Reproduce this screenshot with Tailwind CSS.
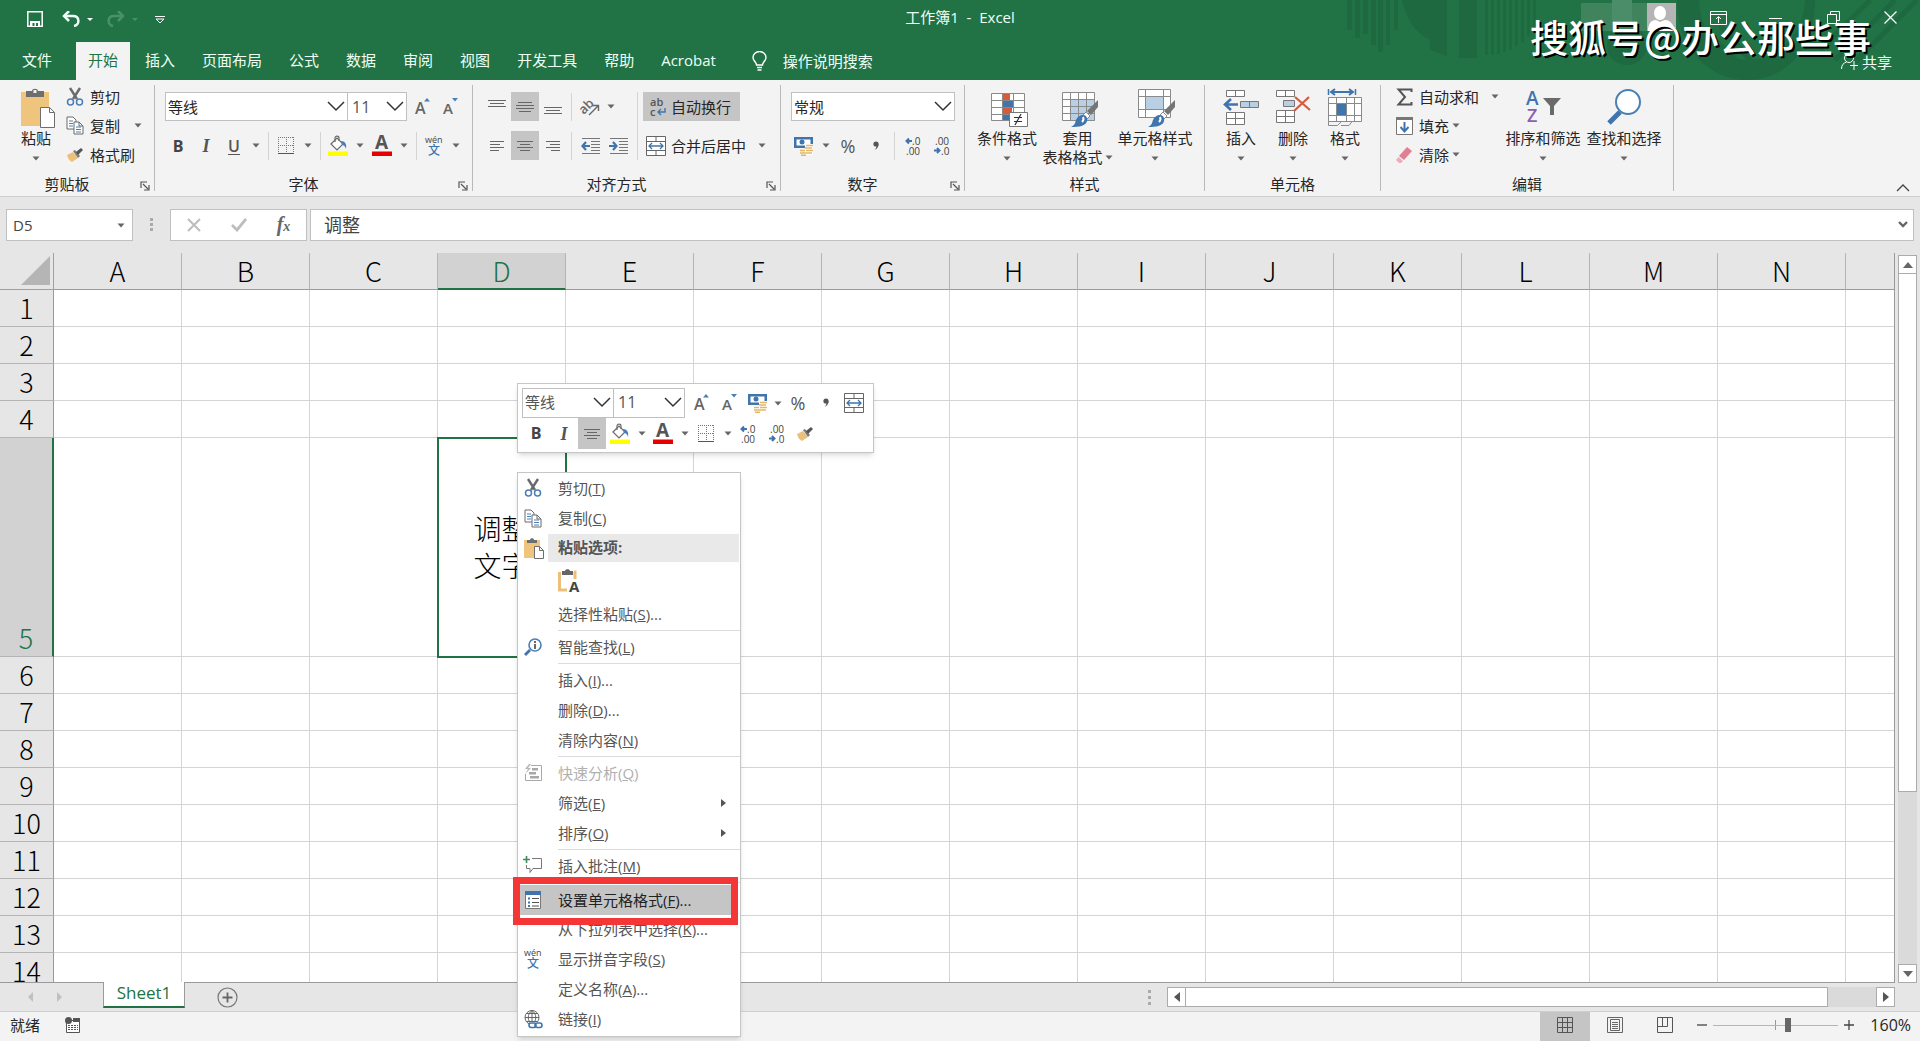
<!DOCTYPE html>
<html lang="zh-CN">
<head>
<meta charset="utf-8">
<title>工作簿1 - Excel</title>
<script src="https://cdn.jsdelivr.net/npm/@tailwindcss/browser@4"></script>
</head>
<body class="relative flex h-screen flex-col overflow-hidden bg-[#e6e6e6] font-['Open_Sans','Noto_Sans_CJK_SC',sans-serif] text-[15px] leading-5 text-[#262626]">

<!-- Shared icons -->
<svg class="hidden" aria-hidden="true">
  <symbol id="caret" viewBox="0 0 8 5"><path d="M.5.5h7L4 4.500z" fill="#666"/></symbol>
  <symbol id="chev" viewBox="0 0 18 12"><path d="M1 1l8 8 8-8" fill="none" stroke="#333" stroke-width="1.5"/></symbol>
  <symbol id="launch" viewBox="0 0 10 10"><path d="M1 7V1h6M3 3l5 5M9 4v5H4" fill="none" stroke="#555" stroke-width="1.2"/></symbol>
  <symbol id="cut" viewBox="0 0 18 20"><path d="M4 1l7 11M14 1L7 12" fill="none" stroke="#6a6a6a" stroke-width="2.4"/><circle cx="4.5" cy="15" r="3" fill="none" stroke="#4a7fb5" stroke-width="1.5"/><circle cx="13.500" cy="15" r="3" fill="none" stroke="#4a7fb5" stroke-width="1.5"/></symbol>
  <symbol id="copy" viewBox="0 0 18 19"><path d="M1 1h6l3 3v9H1z" fill="#fff" stroke="#6a6a6a"/><path d="M3 5h4M3 7.500h4M3 10h4" stroke="#4a7fb5"/><path d="M8 6h5l4 4v8H8z" fill="#fff" stroke="#6a6a6a"/><path d="M13 6v4h4" fill="none" stroke="#6a6a6a"/><path d="M10 11h5M10 13.500h5M10 16h5" stroke="#4a7fb5"/></symbol>
  <symbol id="brush" viewBox="0 0 18 16"><path d="M1 8l6-3 5 6-6 4c-2-1-4-3-5-7z" fill="#ecc07a"/><path d="M7 4l2-1 5 6-2 2z" fill="#7a7a7a"/><path d="M10 5l5-4 2 2-5 5z" fill="#555"/></symbol>
  <symbol id="paste" viewBox="0 0 36 40"><path d="M1 4h28v34H1z" fill="#efc57d"/><path d="M6 3h6c0-3 6-3 6 0h6v6H6z" fill="#6e6e6e"/><rect x="13.500" y="2" width="3" height="3" fill="#f3f3f3"/><path d="M20.500 19.500h9l5 5v15h-14z" fill="#fff" stroke="#6e6e6e"/><path d="M29.500 19.500v5h5" fill="none" stroke="#6e6e6e"/></symbol>
  <symbol id="pasteS" viewBox="0 0 20 21"><path d="M0 2h16v18H0z" fill="#efc57d"/><path d="M3 2h3c0-2.500 4-2.500 4 0h3v3H3z" fill="#6e6e6e"/><path d="M10.500 8.500h5l4 4v8h-9z" fill="#fff" stroke="#6e6e6e"/><path d="M15.500 8.500v4h4" fill="none" stroke="#6e6e6e"/></symbol>
  <symbol id="pasteA" viewBox="0 0 22 24"><path d="M1.500 3v18H9" fill="none" stroke="#ecc07a" stroke-width="3"/><path d="M17 10V3h-1" fill="none" stroke="#ecc07a" stroke-width="3"/><path d="M4 2h3c0-2.500 5-2.500 5 0h3v4H4z" fill="#666"/><text x="11" y="23" font-size="15" font-weight="700" fill="#444" font-family="Open Sans">A</text></symbol>
  <symbol id="growA" viewBox="0 0 20 20"><text x="2" y="17" font-size="16" font-weight="600" fill="#666" font-family="Open Sans">A</text><path d="M11 4.500L14 1l3 3.500z" fill="#4a7fb5"/></symbol>
  <symbol id="shrinkA" viewBox="0 0 20 20"><text x="2" y="17" font-size="15" font-weight="600" fill="#666" font-family="Open Sans">A</text><path d="M11 1l3 3.500L17 1z" fill="#4a7fb5"/></symbol>
  <symbol id="borders" viewBox="0 0 18 18"><path d="M1.500 0v16M9.500 0v16M16.500 0v16M1 .5h16M1 8.500h16" fill="none" stroke="#777" stroke-dasharray="1 1"/><path d="M1 16.500h16" stroke="#555"/></symbol>
  <symbol id="fill" viewBox="0 0 22 22"><path d="M4 9l6-6 6 6-6 6z" fill="#fff" stroke="#6a6a6a" stroke-width="1.200"/><path d="M8 7V3c0-2.500 4-2.500 4 0v3" fill="none" stroke="#6a6a6a" stroke-width="1.200"/><path d="M14 6c4 0 6 3 5 8-1-3-2-4-4-4z" fill="#4a7fb5"/><path d="M1 16.500h20v4.500H1z" fill="#ff0"/></symbol>
  <symbol id="fontA" viewBox="0 0 22 22"><text x="4" y="14" font-size="19" font-weight="700" fill="#555" font-family="Open Sans">A</text><path d="M1 16.500h20v4.500H1z" fill="#e60000"/></symbol>
  <symbol id="wen" viewBox="0 0 20 22"><text x="1" y="8" font-size="9" fill="#444" font-family="Open Sans">wén</text><text x="4" y="20" font-size="12" font-weight="500" fill="#3f74ad" font-family="Noto Sans CJK SC">文</text></symbol>
  <symbol id="alT" viewBox="0 0 18 16"><path d="M0 1.500h18M2 4.500h14M0 7.500h18" stroke="#666"/></symbol>
  <symbol id="alM" viewBox="0 0 18 16"><path d="M2 3.500h14M0 6.500h18M0 9.500h18M3 12.500h12" stroke="#666"/></symbol>
  <symbol id="alB" viewBox="0 0 18 16"><path d="M0 8.500h18M2 11.500h14M0 14.500h18" stroke="#666"/></symbol>
  <symbol id="alL" viewBox="0 0 18 16"><path d="M2 3.500h14M2 6.500h10M2 9.500h14M2 12.500h9" stroke="#666"/></symbol>
  <symbol id="alC" viewBox="0 0 18 16"><path d="M1 3.500h16M4 6.500h10M1 9.500h16M4 12.500h10" stroke="#666"/></symbol>
  <symbol id="alR" viewBox="0 0 18 16"><path d="M2 3.500h14M6 6.500h10M2 9.500h14M7 12.500h9" stroke="#666"/></symbol>
  <symbol id="orient" viewBox="0 0 22 20"><g transform="rotate(-45 8 11)"><text x="0" y="13" font-size="13" font-weight="600" fill="#666" font-family="Open Sans">ab</text></g><path d="M9 18L18 9M13 8.500h5.500V14" fill="none" stroke="#666" stroke-width="1.400"/></symbol>
  <symbol id="indL" viewBox="0 0 20 18"><path d="M1 1.500h18M10 4.500h9M10 7.500h9M10 10.500h9M10 13.500h9M1 16.500h18" stroke="#777"/><path d="M9 9H2M5 5L1.500 9 5 13" fill="none" stroke="#3f74ad" stroke-width="2.200"/></symbol>
  <symbol id="indR" viewBox="0 0 20 18"><path d="M1 1.500h18M10 4.500h9M10 7.500h9M10 10.500h9M10 13.500h9M1 16.500h18" stroke="#777"/><path d="M0 9h7M4 5l3.500 4L4 13" fill="none" stroke="#3f74ad" stroke-width="2.200"/></symbol>
  <symbol id="wrap" viewBox="0 0 18 20"><text x="1" y="9" font-size="11" font-weight="600" fill="#555" font-family="Open Sans">ab</text><text x="1" y="19" font-size="11" font-weight="600" fill="#555" font-family="Open Sans">c</text><path d="M16 11v4H9M12 12l-3 3 3 3" fill="none" stroke="#3f74ad" stroke-width="1.400"/></symbol>
  <symbol id="merge" viewBox="0 0 20 20"><path d="M.5.5h19v19H.5zM.5 5.500h19M.5 14.500h19M10 .5v5M10 14.500v5" fill="#fff" stroke="#666"/><path d="M3 10h14M6 7l-3 3 3 3M14 7l3 3-3 3" fill="none" stroke="#3f74ad" stroke-width="1.300"/></symbol>
  <symbol id="money" viewBox="0 0 22 20"><path d="M1 1h19v11H1z" fill="#3f74ad"/><path d="M3.500 3.500h14v6h-14z" fill="#fff"/><circle cx="9" cy="6" r="2.500" fill="#3f74ad"/><path d="M12 8h8v11h-8z" fill="#fff"/><path d="M13 9.500h7M12 12h7M13 14.500h7M7 14.500h5M7 17h12M8 19.200h5" stroke="#e5b667" stroke-width="1.600"/></symbol>
  <symbol id="comma" viewBox="0 0 10 14"><circle cx="5" cy="5" r="2.600" fill="#555"/><path d="M7.500 5c.2 3-1.500 5-4 6 1.500-1.500 2-3 2-4z" fill="#555"/></symbol>
  <symbol id="decInc" viewBox="0 0 18 20"><path d="M7 5H1.500M4 2.500L1.500 5 4 7.500" fill="none" stroke="#3f74ad" stroke-width="2"/><text x="7" y="9" font-size="10" fill="#444" font-family="Open Sans">.0</text><text x="1" y="18.500" font-size="10" fill="#444" font-family="Open Sans">.00</text></symbol>
  <symbol id="decDec" viewBox="0 0 18 20"><text x="2" y="9" font-size="10" fill="#444" font-family="Open Sans">.00</text><path d="M1 14.500h5.500M4 12l2.500 2.500L4 17" fill="none" stroke="#3f74ad" stroke-width="2"/><text x="8" y="18.500" font-size="10" fill="#444" font-family="Open Sans">.0</text></symbol>
  <symbol id="paintbrush" viewBox="0 0 28 28"><path d="M27 0v7l-7 8-4-4z" fill="#757575"/><path d="M15 12l4 4-3 3-4-4z" fill="#fff" stroke="#8a8a8a"/><path d="M12 15c3 0 5 3 4 6-1 5-8 6-16 6 4-2 4-4 5-7 1-3 4-5 7-5z" fill="#3f74ad"/><path d="M12 17c1 2 0 4-1 5" stroke="#fff" stroke-width="2" fill="none"/></symbol>
  <symbol id="save" viewBox="0 0 16 16"><path d="M.8.8h14.400v14.400H.8z" fill="none" stroke="#fff" stroke-width="1.500"/><path d="M3 10h10v6H3z" fill="#fff"/><path d="M5.500 12h2v3h-2zM9 12h2v3H9z" fill="#217346"/></symbol>
  <symbol id="undo" viewBox="0 0 18 16"><path d="M2 5h9c7 0 7 9 1 10" fill="none" stroke="currentColor" stroke-width="2.500"/><path d="M7 0L2 5l5 5" fill="none" stroke="currentColor" stroke-width="2.500"/></symbol>
</svg>

<!-- Title bar and ribbon tabs -->
<header class="grid shrink-0 bg-[#217346] text-[#f0fff6]">
  <svg class="h-20 w-[600px] justify-self-end [grid-area:1/1]" viewBox="0 0 600 80" aria-hidden="true">
    <g fill="#1e693f">
      <path d="M27 0h5v30h-5zM35 0h5v38h-5zM43 0h5v34h-5zM51 0h5v45h-5zM58 0h5v52h-5zM66 0h4v45h-4zM74 0h4v30h-4z"/>
      <path d="M82 0h34v40h-6C95 33 86 18 82 0z"/><path d="M110 0h17v56l-17-6zM139 0h18v58h-18zM165 0h3v55h-3zM171 0h3v55h-3zM177 0h3v54h-3zM183 0h3v52h-3zM189 0h3v50h-3zM195 0h3v46h-3zM201 0h3v42h-3zM207 0h3v36h-3zM213 0h3v28h-3z"/>
      <path d="M357 0h22c2 36 22 60 50 60s54-24 56-60h10c0 50-30 80-68 80s-70-32-70-80z"/>
      <circle cx="307" cy="45" r="20"/>
    </g>
    <g stroke="#1e693f" stroke-width="5"><path d="M370 38l40 34M385 30l38 38M400 25l36 42M500 50l50-50M515 60l60-60M535 62l62-62"/></g>
    <path d="M261 3h68v28h-68z" fill="#3f845d"/><path d="M292 0h20v26h-20z" fill="#4b8d68"/>
  </svg>
  <div class="flex flex-col [grid-area:1/1]">
    <div class="grid h-[42px] grid-cols-[1fr_auto_1fr] items-start">
      <div class="flex items-center pt-[11px] pl-[27px]">
        <button aria-label="保存"><svg class="size-4"><use href="#save"/></svg></button>
        <button aria-label="撤消" class="ml-[19px] flex items-center gap-[6px]"><svg class="h-4 w-[18px]"><use href="#undo"/></svg><svg class="h-[5px] w-2" viewBox="0 0 8 5"><path d="M1 1h6L4 4z" fill="#fff"/></svg></button>
        <button aria-label="恢复" class="ml-[13px] flex items-center gap-[6px] text-[#4a9169]"><svg class="h-4 w-[18px] -scale-x-100"><use href="#undo"/></svg><svg class="h-[5px] w-2" viewBox="0 0 8 5"><path d="M1 1h6L4 4z" fill="#4a9169"/></svg></button>
        <button aria-label="自定义快速访问工具栏" class="ml-[16px]"><svg class="mt-[2px] h-2 w-[10px]" viewBox="0 0 10 8"><path d="M0 .5h10M1 3h8L5 7z" fill="none" stroke="#fff"/></svg></button>
      </div>
      <h1 class="pt-[7px] whitespace-pre">工作簿1  -  Excel</h1>
      <div class="flex items-start justify-end pr-[23px]">
        <svg class="mt-[3px] mr-[34px] h-7 w-[29px]" viewBox="0 0 29 28" aria-label="帐户"><path d="M0 0h29v28H0z" fill="#b5b5b5"/><ellipse cx="13" cy="10" rx="6" ry="7" fill="#fff"/><path d="M1 28c0-8 4-11 8-11l4 2 5-2c5 0 9 4 9 11z" fill="#fff"/></svg>
        <button aria-label="功能区显示选项" class="mt-[11px] mr-[42px]"><svg class="h-[14px] w-[17px]" viewBox="0 0 17 14"><path d="M.5.5h16v13H.5zM.5 3.500h16M8.500 12V6M6 8l2.500-2.500L11 8" fill="none" stroke="#fff"/></svg></button>
        <button aria-label="最小化" class="mt-[11px] mr-[45px]"><svg class="h-[14px] w-[13px]" viewBox="0 0 13 14"><path d="M0 7.500h13" stroke="#fff"/></svg></button>
        <button aria-label="还原" class="mt-[11px] mr-[44px]"><svg class="h-[14px] w-[13px]" viewBox="0 0 13 14"><path d="M.5 3.500h9v9h-9zM3.500 3.500v-3h9v9h-3" fill="none" stroke="#fff"/></svg></button>
        <button aria-label="关闭" class="mt-[11px]"><svg class="h-[14px] w-[13px]" viewBox="0 0 13 14"><path d="M.5.500l12 12M12.500.500l-12 12" stroke="#fff" stroke-width="1.300"/></svg></button>
      </div>
    </div>
    <nav class="flex h-[38px] items-stretch gap-[3px] pl-[10px]">
      <button class="mr-[9px] px-3 pb-[3px]">文件</button>
      <button class="bg-[#f3f3f3] px-3 pb-[3px] text-[#217346]">开始</button>
      <button class="px-3 pb-[3px]">插入</button>
      <button class="px-3 pb-[3px]">页面布局</button>
      <button class="px-3 pb-[3px]">公式</button>
      <button class="px-3 pb-[3px]">数据</button>
      <button class="px-3 pb-[3px]">审阅</button>
      <button class="px-3 pb-[3px]">视图</button>
      <button class="px-3 pb-[3px]">开发工具</button>
      <button class="px-3 pb-[3px]">帮助</button>
      <button class="px-3 pb-[3px]">Acrobat</button>
      <button class="ml-[21px] flex items-center gap-4 pb-px"><svg class="h-5 w-[15px]" viewBox="0 0 15 20"><path d="M4.500 14c0-3-3.500-4-3.500-7.500a6.500 6 0 0 1 13 0c0 3.500-3.500 4.500-3.500 7.500zM5 16.500h5M5.500 19h4" fill="none" stroke="#fff" stroke-width="1.400"/></svg>操作说明搜索</button>
      <button class="mr-7 ml-auto flex items-center gap-1 pt-px"><svg class="h-[17px] w-[17px]" viewBox="0 0 17 17"><circle cx="8" cy="5" r="4.500" fill="none" stroke="#fff"/><path d="M.5 16c0-4 2-6 5-7M13 8v9M9 12.500h8" fill="none" stroke="#fff"/></svg>共享</button>
    </nav>
  </div>
</header>

<!-- Ribbon -->
<section class="flex h-[117px] shrink-0 border-b border-[#cfcfcf] bg-[#f3f3f3]">
  <div class="flex w-[154px] flex-col">
    <div class="flex h-[91px] pt-[2px] pl-[14px]">
      <button class="flex w-[44px] flex-col items-center pt-[6px]"><svg class="ml-1 h-10 w-9"><use href="#paste"/></svg><span>粘贴</span><svg class="mt-2 h-[5px] w-2"><use href="#caret"/></svg></button>
      <div class="flex flex-col pl-2">
        <button class="flex h-[29px] items-center gap-[6px]"><svg class="h-5 w-[18px]"><use href="#cut"/></svg>剪切</button>
        <button class="flex h-[29px] items-center gap-[6px]"><svg class="h-[19px] w-[18px]"><use href="#copy"/></svg>复制<svg class="ml-2 h-[5px] w-2"><use href="#caret"/></svg></button>
        <button class="flex h-[29px] items-center gap-[6px]"><svg class="h-4 w-[18px]"><use href="#brush"/></svg>格式刷</button>
      </div>
    </div>
    <div class="flex h-[25px] items-center"><span class="flex-1 text-center">剪贴板</span><button aria-label="剪贴板设置" class="w-5"><svg class="mt-1 ml-[6px] size-[10px]"><use href="#launch"/></svg></button></div>
  </div>
  <div class="mt-[5px] h-[106px] w-px bg-[#b9b9b9]"></div>

  <div class="flex w-[317px] flex-col">
    <div class="flex h-[91px] flex-col gap-[10px] pt-3 pl-[9px]">
      <div class="flex h-[29px] items-center pl-px">
        <div class="grid w-[183px] items-center border border-[#c0c0c0] bg-white"><select aria-label="字体" class="h-[27px] appearance-none pl-[2px] [grid-area:1/1]"><option>等线</option></select><svg class="pointer-events-none mr-[2px] h-3 w-[18px] justify-self-end [grid-area:1/1]"><use href="#chev"/></svg></div>
        <div class="grid w-[59px] items-center border border-l-0 border-[#c0c0c0] bg-white"><select aria-label="字号" class="h-[27px] appearance-none pl-1 text-base text-[#555] [grid-area:1/1]"><option>11</option></select><svg class="pointer-events-none mr-[2px] h-3 w-[18px] justify-self-end [grid-area:1/1]"><use href="#chev"/></svg></div>
        <button aria-label="增大字号" class="ml-[2px] flex w-7 justify-center"><svg class="size-5"><use href="#growA"/></svg></button>
        <button aria-label="减小字号" class="flex w-7 justify-center"><svg class="size-5"><use href="#shrinkA"/></svg></button>
      </div>
      <div class="flex h-[29px] items-center">
        <button class="w-7 text-base font-bold text-[#444]">B</button>
        <button class="w-7 font-['Liberation_Serif',serif] text-lg font-bold text-[#555] italic">I</button>
        <button class="w-7 text-base font-semibold text-[#555] underline underline-offset-2">U</button>
        <button aria-label="下划线选项" class="flex w-4 justify-center"><svg class="h-[5px] w-2"><use href="#caret"/></svg></button>
        <i class="mr-[3px] ml-1 h-7 w-px bg-[#d4d4d4]"></i>
        <button aria-label="边框" class="flex w-7 justify-center"><svg class="size-[18px]"><use href="#borders"/></svg></button>
        <button aria-label="边框选项" class="flex w-4 justify-center"><svg class="h-[5px] w-2"><use href="#caret"/></svg></button>
        <i class="mr-[3px] ml-1 h-7 w-px bg-[#d4d4d4]"></i>
        <button aria-label="填充颜色" class="flex w-7 justify-center"><svg class="size-[22px]"><use href="#fill"/></svg></button>
        <button aria-label="填充颜色选项" class="flex w-4 justify-center"><svg class="h-[5px] w-2"><use href="#caret"/></svg></button>
        <button aria-label="字体颜色" class="flex w-7 justify-center"><svg class="size-[22px]"><use href="#fontA"/></svg></button>
        <button aria-label="字体颜色选项" class="flex w-4 justify-center"><svg class="h-[5px] w-2"><use href="#caret"/></svg></button>
        <i class="mr-[3px] ml-1 h-7 w-px bg-[#d4d4d4]"></i>
        <button aria-label="拼音指南" class="flex w-7 justify-center"><svg class="h-[22px] w-5"><use href="#wen"/></svg></button>
        <button aria-label="拼音选项" class="flex w-4 justify-center"><svg class="h-[5px] w-2"><use href="#caret"/></svg></button>
      </div>
    </div>
    <div class="flex h-[25px] items-center"><span class="flex-1 text-center">字体</span><button aria-label="字体设置" class="w-5"><svg class="mt-1 ml-[6px] size-[10px]"><use href="#launch"/></svg></button></div>
  </div>
  <div class="mt-[5px] h-[106px] w-px bg-[#b9b9b9]"></div>

  <div class="flex w-[307px] flex-col">
    <div class="flex h-[91px] pt-3 pl-[10px]">
      <div class="flex w-[150px] flex-col gap-[10px]">
        <div class="flex h-[29px] items-center">
          <button aria-label="顶端对齐" class="flex h-full w-7 items-center justify-center"><svg class="h-4 w-[18px]"><use href="#alT"/></svg></button>
          <button aria-label="垂直居中" class="flex h-full w-7 items-center justify-center bg-[#c5c5c5]"><svg class="h-4 w-[18px]"><use href="#alM"/></svg></button>
          <button aria-label="底端对齐" class="flex h-full w-7 items-center justify-center"><svg class="h-4 w-[18px]"><use href="#alB"/></svg></button>
          <i class="mr-[5px] ml-1 h-7 w-px bg-[#d4d4d4]"></i>
          <button aria-label="方向" class="flex w-7 justify-center"><svg class="h-5 w-[22px]"><use href="#orient"/></svg></button>
          <button aria-label="方向选项" class="flex w-3 justify-center"><svg class="h-[5px] w-2"><use href="#caret"/></svg></button>
        </div>
        <div class="flex h-[29px] items-center">
          <button aria-label="左对齐" class="flex h-full w-7 items-center justify-center"><svg class="h-4 w-[18px]"><use href="#alL"/></svg></button>
          <button aria-label="居中" class="flex h-full w-7 items-center justify-center bg-[#c5c5c5]"><svg class="h-4 w-[18px]"><use href="#alC"/></svg></button>
          <button aria-label="右对齐" class="flex h-full w-7 items-center justify-center"><svg class="h-4 w-[18px]"><use href="#alR"/></svg></button>
          <i class="mr-[5px] ml-1 h-7 w-px bg-[#d4d4d4]"></i>
          <button aria-label="减少缩进量" class="flex w-7 justify-center"><svg class="h-[18px] w-5"><use href="#indL"/></svg></button>
          <button aria-label="增加缩进量" class="flex w-7 justify-center"><svg class="h-[18px] w-5"><use href="#indR"/></svg></button>
        </div>
      </div>
      <i class="mr-[5px] ml-1 h-[68px] w-px bg-[#d4d4d4]"></i>
      <div class="flex flex-col items-start gap-[10px]">
        <button class="flex h-[29px] items-center gap-1 bg-[#c5c5c5] pr-[9px] pl-[6px]"><svg class="h-5 w-[18px]"><use href="#wrap"/></svg>自动换行</button>
        <button class="flex h-[29px] items-center gap-[5px] pl-[3px]"><svg class="size-5"><use href="#merge"/></svg>合并后居中<svg class="ml-[7px] h-[5px] w-2"><use href="#caret"/></svg></button>
      </div>
    </div>
    <div class="flex h-[25px] items-center"><span class="flex-1 text-center">对齐方式</span><button aria-label="对齐设置" class="w-5"><svg class="mt-1 ml-[6px] size-[10px]"><use href="#launch"/></svg></button></div>
  </div>
  <div class="mt-[5px] h-[106px] w-px bg-[#b9b9b9]"></div>

  <div class="flex w-[183px] flex-col">
    <div class="flex h-[91px] flex-col gap-[10px] pt-3 pl-[9px]">
      <div class="ml-px grid h-[29px] w-[164px] items-center border border-[#c0c0c0] bg-white"><select aria-label="数字格式" class="h-[27px] appearance-none pl-[2px] [grid-area:1/1]"><option>常规</option></select><svg class="pointer-events-none mr-[2px] h-3 w-[18px] justify-self-end [grid-area:1/1]"><use href="#chev"/></svg></div>
      <div class="flex h-[29px] items-center">
        <button aria-label="会计数字格式" class="flex w-7 justify-center"><svg class="h-5 w-[22px]"><use href="#money"/></svg></button>
        <button aria-label="会计格式选项" class="flex w-4 justify-center"><svg class="h-[5px] w-2"><use href="#caret"/></svg></button>
        <button class="w-7 text-lg text-[#555]">%</button>
        <button aria-label="千位分隔样式" class="flex w-7 justify-center"><svg class="h-[14px] w-[10px]"><use href="#comma"/></svg></button>
        <i class="mr-[5px] ml-1 h-7 w-px bg-[#d4d4d4]"></i>
        <button aria-label="增加小数位数" class="flex w-7 justify-center"><svg class="h-5 w-[18px]"><use href="#decInc"/></svg></button>
        <button aria-label="减少小数位数" class="flex w-7 justify-center"><svg class="h-5 w-[18px]"><use href="#decDec"/></svg></button>
      </div>
    </div>
    <div class="flex h-[25px] items-center"><span class="flex-1 text-center">数字</span><button aria-label="数字设置" class="w-5"><svg class="mt-1 ml-[6px] size-[10px]"><use href="#launch"/></svg></button></div>
  </div>
  <div class="mt-[5px] h-[106px] w-px bg-[#b9b9b9]"></div>

  <div class="flex w-[239px] flex-col">
    <div class="flex h-[91px] pt-2 pl-2">
      <button class="flex w-[68px] flex-col items-center"><svg class="ml-1 h-10 w-[38px]" viewBox="0 0 38 40"><path d="M1.500 5.500h33v27h-33zM1.500 12.500h33M1.500 19.500h33M1.500 26.500h33M12.500 5.500v27M23.500 5.500v27" fill="#fff" stroke="#8a8a8a"/><path d="M13 6h7v6h-7zM13 20h9v6h-9z" fill="#d9593b"/><path d="M13 13h10v6H13zM13 27h6v5h-6z" fill="#3f74ad"/><path d="M19.500 24.500h18v14h-18z" fill="#fff" stroke="#777"/><path d="M24 29.500h8M24 33.500h8M31 26l-6 11" stroke="#333" stroke-width="1.200"/></svg><span>条件格式</span><svg class="mt-2 h-[5px] w-2"><use href="#caret"/></svg></button>
      <button class="flex w-[73px] flex-col items-center"><svg class="ml-1 h-10 w-[38px]" viewBox="0 0 38 40"><path d="M1.500 4.500h32v28h-32z" fill="#fff"/><path d="M9 11h25v22H9z" fill="#b9cfe4"/><path d="M1.500 4.500h32v28h-32zM1.500 11.500h32M1.500 18.500h32M1.500 25.500h32M9.500 4.500v28M17.500 4.500v28M25.500 4.500v28" fill="none" stroke="#8a8a8a"/><use href="#paintbrush" x="10" y="12" width="28" height="28"/></svg><span>套用</span><span class="-mt-px flex items-center gap-[2px] whitespace-nowrap">表格格式<svg class="h-[5px] w-2"><use href="#caret"/></svg></span></button>
      <button class="flex w-[82px] flex-col items-center"><svg class="ml-1 h-10 w-[38px]" viewBox="0 0 38 40"><path d="M.5 1.500h32v28H.5z" fill="#fff"/><path d="M8 8h18v13H8z" fill="#b9cfe4"/><path d="M.5 1.500h32v28H.5zM.5 8.500h32M.5 21.500h32M7.500 1.500v28M25.500 1.500v28" fill="none" stroke="#8a8a8a"/><use href="#paintbrush" x="10" y="12" width="28" height="28"/></svg><span>单元格样式</span><svg class="mt-2 h-[5px] w-2"><use href="#caret"/></svg></button>
    </div>
    <div class="flex h-[25px] items-center justify-center">样式</div>
  </div>
  <div class="mt-[5px] h-[106px] w-px bg-[#b9b9b9]"></div>

  <div class="flex w-[175px] flex-col">
    <div class="flex h-[91px] pt-2 pl-[10px]">
      <button class="flex w-[52px] flex-col items-center"><svg class="h-10 w-9" viewBox="0 0 36 40"><path d="M3.500 2.500h18v6h-18zM12.500 2.500v6M3.500 24.500h18v12h-18zM3.500 30.500h18M12.500 24.500v12" fill="#fff" stroke="#777"/><path d="M17.500 13.500h18v6h-18zM26.500 13.500v6" fill="#b9cfe4" stroke="#777"/><path d="M15 16.500H2M8 11l-6 5.500L8 22" fill="none" stroke="#3f74ad" stroke-width="2.600"/></svg><span>插入</span><svg class="mt-2 h-[5px] w-2"><use href="#caret"/></svg></button>
      <button class="flex w-[52px] flex-col items-center"><svg class="h-10 w-9" viewBox="0 0 36 40"><path d="M1.500 2.500h18v6h-18zM10.500 2.500v6M1.500 22.500h18v12h-18zM1.500 28.500h18M10.500 22.500v12" fill="#fff" stroke="#777"/><path d="M8.500 12.500h11v6h-11z" fill="#b9cfe4" stroke="#777"/><path d="M20 9l15 13M34 9L19 23" stroke="#d9593b" stroke-width="2.200"/></svg><span>删除</span><svg class="mt-2 h-[5px] w-2"><use href="#caret"/></svg></button>
      <button class="flex w-[52px] flex-col items-center"><svg class="h-10 w-9" viewBox="0 0 36 40"><path d="M1.500 1v6M28.500 1v6" stroke="#3f74ad" stroke-width="1.500"/><path d="M4 4h22M8 1L4 4l4 3M22 1l4 3-4 3" fill="none" stroke="#3f74ad" stroke-width="2"/><path d="M1.500 9.500h33v24h-33zM1.500 15.500h33M1.500 27.500h33M9.500 9.500v24M19.500 9.500v24M27.500 9.500v24" fill="#fff" stroke="#8a8a8a"/><path d="M10 16h9v11h-9z" fill="#3f74ad"/><path d="M1.500 33.500v4h9l4-4M14 37.500h8l3-4" fill="none" stroke="#8a8a8a"/></svg><span>格式</span><svg class="mt-2 h-[5px] w-2"><use href="#caret"/></svg></button>
    </div>
    <div class="flex h-[25px] items-center justify-center">单元格</div>
  </div>
  <div class="mt-[5px] h-[106px] w-px bg-[#b9b9b9]"></div>

  <div class="flex w-[292px] flex-col">
    <div class="flex h-[91px] pl-[15px]">
      <div class="flex w-[107px] flex-col items-start pt-[2px]">
        <button class="flex h-[29px] items-center gap-[6px]"><svg class="h-[18px] w-[17px]" viewBox="0 0 17 18"><path d="M15.500 4V1.500H2.500L9 9l-6.500 7.500h13V14" fill="none" stroke="#555" stroke-width="2"/></svg>自动求和<svg class="ml-[6px] h-[5px] w-2"><use href="#caret"/></svg></button>
        <button class="flex h-[29px] items-center gap-[6px]"><svg class="h-[18px] w-[17px]" viewBox="0 0 17 18"><path d="M.5.5h16v17H.5z" fill="#fff" stroke="#777"/><path d="M0 0h17v3H0z" fill="#777"/><path d="M8.500 5v9M4.500 10l4 4.500 4-4.500" fill="none" stroke="#3f74ad" stroke-width="2"/></svg>填充<svg class="-ml-[3px] h-[5px] w-2"><use href="#caret"/></svg></button>
        <button class="flex h-[29px] items-center gap-[6px]"><svg class="h-[18px] w-[17px]" viewBox="0 0 17 18"><path d="M11 1l5 4-8 9-5-4z" fill="#df7f94"/><path d="M2.500 11l4.500 4-2 2H3l-3-3z" fill="#efabb8"/></svg>清除<svg class="-ml-[3px] h-[5px] w-2"><use href="#caret"/></svg></button>
      </div>
      <button class="flex w-[80px] flex-col items-center pt-2"><svg class="h-10 w-9" viewBox="0 0 36 40"><text x="1" y="17" font-size="19" font-weight="600" fill="#3f74ad" font-family="Open Sans">A</text><text x="2" y="34" font-size="18" font-weight="600" fill="#8b5fb0" font-family="Open Sans">Z</text><path d="M18 10h18l-7 8v9h-4v-9z" fill="#6a6a6a"/></svg><span>排序和筛选</span><svg class="mt-2 h-[5px] w-2"><use href="#caret"/></svg></button>
      <button class="flex w-[82px] flex-col items-center pt-2"><svg class="h-10 w-9" viewBox="0 0 36 40"><path d="M14 24L3 35" stroke="#3f74ad" stroke-width="5"/><circle cx="22" cy="14" r="12" fill="#fff" stroke="#4a7fb5" stroke-width="2"/></svg><span>查找和选择</span><svg class="mt-2 h-[5px] w-2"><use href="#caret"/></svg></button>
    </div>
    <div class="flex h-[25px] items-center justify-center">编辑</div>
  </div>
  <div class="mt-[5px] h-[106px] w-px bg-[#b9b9b9]"></div>
  <button aria-label="折叠功能区" class="mr-[10px] mb-[4px] ml-auto self-end"><svg class="h-[8px] w-[14px]" viewBox="0 0 14 8"><path d="M1 7l6-6 6 6" fill="none" stroke="#444" stroke-width="1.300"/></svg></button>
</section>

<!-- Formula bar -->
<section class="flex h-14 shrink-0 items-start pt-3 pr-[6px] pl-[6px] text-[#444]">
  <div class="grid w-[127px] items-center border border-[#c0c0c0] bg-white"><input aria-label="名称框" class="h-[30px] w-full pb-px pl-[6px] [grid-area:1/1]" value="D5"><svg class="mr-[7px] h-[5px] w-2 justify-self-end [grid-area:1/1]"><use href="#caret"/></svg></div>
  <svg class="mt-[9px] h-[14px] w-[37px]" viewBox="0 0 37 14" aria-hidden="true"><path d="M17 0h3v3h-3zM17 5h3v3h-3zM17 10h3v3h-3z" fill="#aaa"/></svg>
  <div class="flex h-8 w-[137px] items-center border border-[#c0c0c0] bg-white">
    <button aria-label="取消" class="flex flex-1 justify-center"><svg class="size-[14px]" viewBox="0 0 14 14"><path d="M1 1l12 12M13 1L1 13" stroke="#bdbdbd" stroke-width="2"/></svg></button>
    <button aria-label="输入" class="flex flex-1 justify-center"><svg class="h-[14px] w-4" viewBox="0 0 16 14"><path d="M1 7l5 5L15 1" fill="none" stroke="#bdbdbd" stroke-width="2.800"/></svg></button>
    <button aria-label="插入函数" class="flex-1 pb-[3px] font-['Liberation_Serif',serif] text-xl font-bold text-[#666] italic">f<span class="text-sm">x</span></button>
  </div>
  <div class="ml-[3px] grid flex-1 items-center border border-[#c0c0c0] bg-white"><input aria-label="编辑栏" class="h-[30px] w-full pb-[3px] pl-[13px] text-lg [grid-area:1/1]" value="调整"><svg class="mr-1 h-2 w-3 justify-self-end [grid-area:1/1]" viewBox="0 0 12 8"><path d="M2 1l4 4 4-4" fill="none" stroke="#666" stroke-width="2.400"/></svg></div>
</section>

<!-- Worksheet -->
<main class="flex min-h-0 flex-1">
  <div class="min-w-0 flex-1 overflow-hidden border-r border-b border-[#9a9a9a] bg-white">
    <table class="w-full table-fixed border-separate border-spacing-0 font-['Noto_Sans_CJK_SC',sans-serif] text-[27px] leading-9 font-light text-black">
      <thead><tr id="heads" class="h-[37px] bg-[#e6e6e6] leading-[34px]"><th class="h-[37px] w-[54px] border-r border-b border-[#a0a0a0] p-0"><svg class="ml-5 size-8" viewBox="0 0 32 32"><path d="M30 1v29H1z" fill="#b5b5b5"/></svg></th></tr></thead>
      <tbody id="rows"></tbody>
    </table>
  </div>
  <div class="flex w-[25px] flex-col px-[3px] pt-[2px]">
    <button aria-label="向上滚动" class="flex h-[19px] items-center justify-center border border-[#ababab] bg-white"><svg class="h-[6px] w-[10px]" viewBox="0 0 10 6"><path d="M0 6h10L5 0z" fill="#666"/></svg></button>
    <div class="flex flex-1 flex-col bg-[#dadada]"><div class="h-[75%] border border-t-0 border-[#ababab] bg-white"></div></div>
    <button aria-label="向下滚动" class="flex h-[19px] items-center justify-center border border-[#ababab] bg-white"><svg class="h-[6px] w-[10px]" viewBox="0 0 10 6"><path d="M0 0h10L5 6z" fill="#666"/></svg></button>
  </div>
</main>

<!-- Sheet tabs -->
<div class="flex h-[29px] shrink-0 items-start border-b border-[#cfcfcf] pr-[25px]">
  <button aria-label="上一个工作表" class="mt-[9px] ml-[28px]"><svg class="h-[10px] w-[6px]" viewBox="0 0 6 10"><path d="M5 0v10L0 5z" fill="#c0c0c0"/></svg></button>
  <button aria-label="下一个工作表" class="mt-[9px] ml-[23px]"><svg class="h-[10px] w-[6px]" viewBox="0 0 6 10"><path d="M0 0v10l5-5z" fill="#c0c0c0"/></svg></button>
  <button class="-mt-px ml-10 h-[26px] w-[82px] border-r border-b-2 border-l border-[#9a9a9a] border-b-[#217346] bg-white pb-[3px] text-[17px] text-[#217346]">Sheet1</button>
  <button aria-label="新工作表" class="mt-[4px] ml-[32px]"><svg class="size-[21px]" viewBox="0 0 21 21"><circle cx="10.500" cy="10.500" r="9.500" fill="none" stroke="#777" stroke-width="1.200"/><path d="M10.500 5.500v10M5.500 10.500h10" stroke="#666" stroke-width="1.800"/></svg></button>
  <svg class="mt-[7px] ml-auto h-[15px] w-[3px]" viewBox="0 0 3 15" aria-hidden="true"><path d="M0 0h3v3H0zM0 6h3v3H0zM0 12h3v3H0z" fill="#aaa"/></svg>
  <div class="mt-[4px] ml-4 flex h-5 w-[728px] bg-[#dadada]">
    <button aria-label="向左滚动" class="flex w-[19px] items-center justify-center border border-[#ababab] bg-white"><svg class="h-[10px] w-[6px]" viewBox="0 0 6 10"><path d="M6 0v10L0 5z" fill="#555"/></svg></button>
    <div class="flex flex-1"><div class="w-[93%] border border-l-0 border-[#ababab] bg-white"></div></div>
    <button aria-label="向右滚动" class="flex w-[19px] items-center justify-center border border-[#ababab] bg-white"><svg class="h-[10px] w-[6px]" viewBox="0 0 6 10"><path d="M0 0v10l6-5z" fill="#555"/></svg></button>
  </div>
</div>

<!-- Status bar -->
<footer class="flex h-[29px] shrink-0 items-center bg-[#f3f3f3] pl-[10px]">
  <span class="pb-[3px]">就绪</span>
  <button aria-label="录制宏" class="ml-[25px] pb-[3px]"><svg class="h-4 w-[15px]" viewBox="0 0 15 16"><path d="M1.500 3.500h13v12h-13z" fill="#fff" stroke="#555"/><path d="M8 1h7v4H8z" fill="#555"/><path d="M3 8.500h10M3 10.500h10M3 12.500h10" stroke="#555" stroke-dasharray="2 1"/><circle cx="3.500" cy="3.500" r="3.500" fill="#555"/></svg></button>
  <button aria-label="普通视图" class="ml-auto flex h-full w-[50px] items-center justify-center bg-[#c5c5c5] pb-[3px]"><svg class="size-4" viewBox="0 0 16 16"><path d="M.5.5h15v15H.5zM.5 5.500h15M.5 10.500h15M5.500.5v15M10.500.5v15" fill="none" stroke="#555"/></svg></button>
  <button aria-label="页面布局视图" class="flex h-full w-[50px] items-center justify-center pb-[3px]"><svg class="size-4" viewBox="0 0 16 16"><path d="M.5.5h15v15H.5zM3.500 2.500h9v11h-9zM5 5.500h6M5 7.500h6M5 9.500h6M5 11.500h6" fill="none" stroke="#666"/></svg></button>
  <button aria-label="分页预览" class="flex h-full w-[50px] items-center justify-center pb-[3px]"><svg class="size-4" viewBox="0 0 16 16"><path d="M.5.5h15v15H.5zM5.500.5v9M10.500.5v9M.5 9.500h10" fill="none" stroke="#555"/></svg></button>
  <div class="flex items-center pb-[3px] pl-[7px]">
    <button aria-label="缩小"><svg class="size-[10px]" viewBox="0 0 10 10"><path d="M0 5h10" stroke="#444" stroke-width="1.300"/></svg></button>
    <div class="ml-[6px] grid w-[125px] items-center">
      <i class="h-[10px] w-px justify-self-center bg-[#999] [grid-area:1/1]"></i>
      <input aria-label="显示比例" type="range" min="10" max="400" value="245" class="h-4 w-full appearance-none bg-[linear-gradient(#b5b5b5,#b5b5b5)] bg-[length:100%_1px] bg-center bg-no-repeat [grid-area:1/1] [&::-webkit-slider-thumb]:h-[14px] [&::-webkit-slider-thumb]:w-[6px] [&::-webkit-slider-thumb]:appearance-none [&::-webkit-slider-thumb]:bg-[#666]">
    </div>
    <button aria-label="放大" class="ml-[6px]"><svg class="size-[10px]" viewBox="0 0 10 10"><path d="M0 5h10M5 0v10" stroke="#444" stroke-width="1.300"/></svg></button>
    <span class="mr-[9px] ml-4 text-base">160%</span>
  </div>
</footer>

<!-- Mini toolbar -->
<div class="absolute top-[383px] left-[517px] w-[357px] border border-[#c6c6c6] bg-white pt-1 pb-[3px] pl-1 shadow-md">
  <div class="flex h-[30px] items-center">
    <div class="grid w-[92px] items-center border border-[#c0c0c0]"><select aria-label="浮动工具栏字体" class="h-7 appearance-none pb-[3px] pl-[2px] text-[#555] [grid-area:1/1]"><option>等线</option></select><svg class="pointer-events-none mr-[2px] h-3 w-[18px] justify-self-end [grid-area:1/1]"><use href="#chev"/></svg></div>
    <div class="mr-[3px] grid w-[71px] items-center border border-l-0 border-[#c0c0c0]"><select aria-label="浮动工具栏字号" class="h-7 appearance-none pb-[3px] pl-1 text-base text-[#555] [grid-area:1/1]"><option>11</option></select><svg class="pointer-events-none mr-[2px] h-3 w-[18px] justify-self-end [grid-area:1/1]"><use href="#chev"/></svg></div>
    <button aria-label="增大字号" class="flex w-7 justify-center"><svg class="size-5"><use href="#growA"/></svg></button>
    <button aria-label="减小字号" class="flex w-7 justify-center"><svg class="size-5"><use href="#shrinkA"/></svg></button>
    <button aria-label="会计数字格式" class="flex w-7 justify-center"><svg class="h-5 w-[22px]"><use href="#money"/></svg></button>
    <button aria-label="会计格式选项" class="flex w-3 justify-center"><svg class="h-[5px] w-2"><use href="#caret"/></svg></button>
    <button class="w-7 text-lg text-[#555]">%</button>
    <button aria-label="千位分隔样式" class="flex w-7 justify-center"><svg class="h-[14px] w-[10px]"><use href="#comma"/></svg></button>
    <button aria-label="合并后居中" class="flex w-7 justify-center"><svg class="size-5"><use href="#merge"/></svg></button>
  </div>
  <div class="flex h-[31px] items-center">
    <button class="w-7 pb-px text-base font-bold text-[#444]">B</button>
    <button class="w-7 font-['Liberation_Serif',serif] text-lg font-bold text-[#555] italic">I</button>
    <button aria-label="居中" class="flex h-full w-7 items-center justify-center bg-[#c5c5c5]"><svg class="h-4 w-[18px]"><use href="#alC"/></svg></button>
    <button aria-label="填充颜色" class="flex w-7 justify-center"><svg class="size-[22px]"><use href="#fill"/></svg></button>
    <button aria-label="填充颜色选项" class="flex w-[15px] justify-center"><svg class="h-[5px] w-2"><use href="#caret"/></svg></button>
    <button aria-label="字体颜色" class="flex w-7 justify-center"><svg class="size-[22px]"><use href="#fontA"/></svg></button>
    <button aria-label="字体颜色选项" class="flex w-[15px] justify-center"><svg class="h-[5px] w-2"><use href="#caret"/></svg></button>
    <button aria-label="边框" class="flex w-7 justify-center"><svg class="size-[18px]"><use href="#borders"/></svg></button>
    <button aria-label="边框选项" class="flex w-[15px] justify-center"><svg class="h-[5px] w-2"><use href="#caret"/></svg></button>
    <button aria-label="增加小数位数" class="flex w-7 justify-center"><svg class="h-5 w-[18px]"><use href="#decInc"/></svg></button>
    <button aria-label="减少小数位数" class="flex w-7 justify-center"><svg class="h-5 w-[18px]"><use href="#decDec"/></svg></button>
    <button aria-label="格式刷" class="flex w-7 justify-center"><svg class="h-4 w-[18px]"><use href="#brush"/></svg></button>
  </div>
</div>

<!-- Context menu -->
<div class="absolute top-[472px] left-[517px] flex w-[224px] flex-col border border-[#c6c6c6] bg-white pt-px pb-px text-[#555] shadow-md">
  <button class="flex h-[30px] items-center pb-[2px]"><span class="flex w-10 justify-start pl-[6px]"><svg class="h-5 w-[18px]"><use href="#cut"/></svg></span>剪切(<u>T</u>)</button>
  <button class="flex h-[30px] items-center pb-[2px]"><span class="flex w-10 justify-start pl-[6px]"><svg class="h-[19px] w-[18px]"><use href="#copy"/></svg></span>复制(<u>C</u>)</button>
  <div class="flex h-7 items-center font-bold"><span class="flex w-[30px] justify-start pl-[6px]"><svg class="h-[21px] w-5"><use href="#pasteS"/></svg></span><span class="mr-px flex h-full flex-1 items-center bg-[#e9e9e9] pb-[2px] pl-[10px]">粘贴选项:</span></div>
  <button aria-label="只保留文本" class="flex h-[38px] items-center pl-10"><svg class="h-6 w-[22px]"><use href="#pasteA"/></svg></button>
  <button class="flex h-[30px] items-center pb-[2px] pl-10">选择性粘贴(<u>S</u>)...</button>
  <hr class="mb-[2px] ml-10 border-[#dcdcdc]">
  <button class="flex h-[30px] items-center pb-[2px]"><span class="flex w-10 justify-start pl-[6px]"><svg class="size-[18px]" viewBox="0 0 18 18"><path d="M6 12l-5 5" stroke="#3f74ad" stroke-width="2.800"/><circle cx="11" cy="7" r="6" fill="#fff" stroke="#4a7fb5" stroke-width="1.600"/><path d="M11 6v5M11 3v2" stroke="#444" stroke-width="1.600"/></svg></span>智能查找(<u>L</u>)</button>
  <hr class="mb-[2px] ml-10 border-[#dcdcdc]">
  <button class="flex h-[30px] items-center pb-[2px] pl-10">插入(<u>I</u>)...</button>
  <button class="flex h-[30px] items-center pb-[2px] pl-10">删除(<u>D</u>)...</button>
  <button class="flex h-[30px] items-center pb-[2px] pl-10">清除内容(<u>N</u>)</button>
  <hr class="mb-[2px] ml-10 border-[#dcdcdc]">
  <button disabled class="flex h-[30px] items-center pb-[2px] text-[#b0b0b0]"><span class="flex w-10 justify-start pl-[6px]"><svg class="size-[18px]" viewBox="0 0 18 18"><path d="M7 1.500h10.500v15H1.500V10" fill="none" stroke="#a8a8a8"/><path d="M8 4h6v2.500H8zM5 8h7v2.500H5zM6 12h9v2.500H6z" fill="#a8a8a8"/><path d="M5 0L1 5h3l-3 5 6-6H4l3-4z" fill="#b8b8b8"/></svg></span>快速分析(<u>Q</u>)</button>
  <button class="flex h-[30px] items-center pb-[2px] pl-10">筛选(<u>E</u>)<svg class="mr-[14px] ml-auto h-2 w-[5px]" viewBox="0 0 5 8"><path d="M0 0v8l5-4z" fill="#555"/></svg></button>
  <button class="flex h-[30px] items-center pb-[2px] pl-10">排序(<u>O</u>)<svg class="mr-[14px] ml-auto h-2 w-[5px]" viewBox="0 0 5 8"><path d="M0 0v8l5-4z" fill="#555"/></svg></button>
  <hr class="mb-[2px] ml-10 border-[#dcdcdc]">
  <button class="flex h-[30px] items-center pb-[2px]"><span class="flex w-10 justify-start pl-[5px]"><svg class="mb-[3px] h-[17px] w-[19px]" viewBox="0 0 19 17"><path d="M9 2.500h9.500v10H10l-3 4v-4H3.500V9" fill="none" stroke="#777"/><path d="M3.500 0v7M0 3.500h7" stroke="#3f8a63" stroke-width="1.600"/></svg></span>插入批注(<u>M</u>)</button>
  <hr class="mb-[2px] ml-10 border-[#dcdcdc]">
  <button class="mx-[2px] flex h-[30px] items-center bg-[#c5c5c5] pb-px text-[#222]"><span class="flex w-[38px] justify-start pl-[5px]"><svg class="h-[18px] w-4" viewBox="0 0 16 18"><path d="M.5.5h15v17H.5z" fill="#fff" stroke="#777"/><path d="M0 0h16v4H0z" fill="#3f74ad"/><path d="M7 7.500h7M7 11.500h7M7 15h7" stroke="#555"/><path d="M3 7.500h2M3 11.500h2M3 15h2" stroke="#3f74ad" stroke-width="1.800"/></svg></span>设置单元格格式(<u>F</u>)...</button>
  <button class="flex h-[30px] items-center pb-[2px] pl-10">从下拉列表中选择(<u>K</u>)...</button>
  <button class="flex h-[30px] items-center pb-[2px]"><span class="flex w-10 justify-start pl-[5px]"><svg class="h-[22px] w-5"><use href="#wen"/></svg></span>显示拼音字段(<u>S</u>)</button>
  <button class="flex h-[30px] items-center pb-[2px] pl-10">定义名称(<u>A</u>)...</button>
  <button class="flex h-[30px] items-center pb-[2px]"><span class="flex w-10 justify-start pl-[6px]"><svg class="size-[19px]" viewBox="0 0 19 19"><circle cx="8" cy="7.500" r="7" fill="#fff" stroke="#666"/><path d="M8 .5v14M1 7.500h14M2.500 3.500h11M2.500 11.500h11M8 .5C3 4 3 11 8 14.500M8 .5c5 3.500 5 10.500 0 14" fill="none" stroke="#666"/><path d="M6 12h12v7H6z" fill="#fff"/><rect x="5" y="13" width="7" height="4.500" rx="2.200" fill="none" stroke="#3f74ad" stroke-width="1.600"/><rect x="11" y="13" width="7" height="4.500" rx="2.200" fill="none" stroke="#3f74ad" stroke-width="1.600"/></svg></span>链接(<u>I</u>)</button>
</div>
<div class="pointer-events-none absolute top-[877px] left-[513px] h-12 w-[225px] border-7 border-[#f43636]"></div>

<!-- Watermark -->
<p class="pointer-events-none absolute top-2 right-[49px] font-['Noto_Sans_CJK_SC',sans-serif] text-[38px] leading-[56px] font-medium whitespace-nowrap text-white [text-shadow:2px_2px_0_#000]">搜狐号@办公那些事</p>

<script>
  const letters = 'ABCDEFGHIJKLMN'.split('').concat('');
  document.getElementById('heads').insertAdjacentHTML('beforeend', letters.map(c =>
    c === 'D'
      ? '<th class="h-[37px] w-[128px] border-r border-b-2 border-[#b5b5b5] border-b-[#217346] bg-[#d2d2d2] p-0 font-light text-[#217346]">D</th>'
      : c
        ? `<th class="h-[37px] w-[128px] border-r border-b border-[#b5b5b5] border-b-[#9a9a9a] p-0 font-light">${c}</th>`
        : '<th class="border-b border-[#9a9a9a] p-0"></th>').join(''));
  let html = '';
  for (let r = 1; r <= 14; r++) {
    html += r === 5
      ? '<tr class="h-[219px]"><th class="border-r-2 border-b border-[#b5b5b5] border-r-[#217346] bg-[#d2d2d2] p-0 align-bottom font-light text-[#217346]">5</th>'
      : `<tr class="h-[37px]"><th class="border-r border-b border-[#b5b5b5] border-r-[#9a9a9a] bg-[#e6e6e6] p-0 font-light">${r}</th>`;
    letters.forEach(c => {
      html += r === 5 && c === 'D'
        ? '<td class="border-r border-b border-[#d4d4d4] p-0 text-center text-[28px] leading-[37px] outline-2 -outline-offset-1 outline-[#217346]">调整<br>文字</td>'
        : c ? '<td class="border-r border-b border-[#d4d4d4] p-0"></td>' : '<td class="border-b border-[#d4d4d4] p-0"></td>';
    });
    html += '</tr>';
  }
  document.getElementById('rows').innerHTML = html;
</script>
</body>
</html>
